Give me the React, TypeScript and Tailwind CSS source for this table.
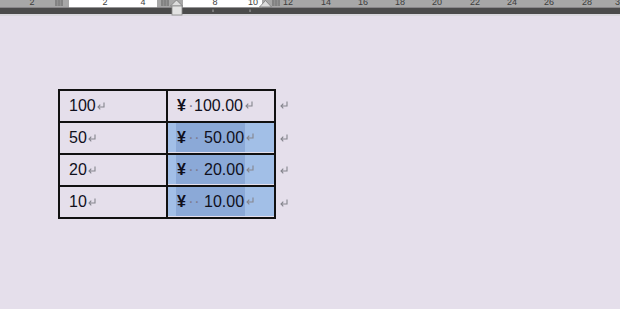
import React from "react";

const rows = [
  { qty: "100", spaces: 1, amount: "100.00", selected: false },
  { qty: "50", spaces: 2, amount: "50.00", selected: true },
  { qty: "20", spaces: 2, amount: "20.00", selected: true },
  { qty: "10", spaces: 2, amount: "10.00", selected: true },
];

const rulerLabels: [number, string][] = [
  [32, "2"],
  [105, "2"],
  [143, "4"],
  [215, "8"],
  [253, "10"],
  [288, "12"],
  [326, "14"],
  [363, "16"],
  [400, "18"],
  [437, "20"],
  [475, "22"],
  [512, "24"],
  [549, "26"],
  [587, "28"],
  [620, "30"],
];

const ReturnMark = () => (
  <svg width="10" height="9" viewBox="0 0 10 9" className="shrink-0">
    <path
      d="M8 0.5 V5 H2 M4.3 2.7 L2 5 L4.3 7.3"
      fill="none"
      stroke="#85858d"
      strokeWidth="1.1"
    />
  </svg>
);

const GridIcon = ({ x }: { x: number }) => (
  <g stroke="#6e6e6e" strokeWidth="0.8">
    <path d={`M${x} 1 H${x + 8} M${x} 3 H${x + 8} M${x} 5 H${x + 8}`} />
    <path d={`M${x + 1} 0 V6 M${x + 4} 0 V6 M${x + 7} 0 V6`} />
  </g>
);

const Ruler = () => (
  <svg width="620" height="16" viewBox="0 0 620 16" className="block">
    <rect x="0" y="0" width="620" height="7.5" fill="#a7a7a7" />
    <rect x="69" y="0" width="88" height="7.5" fill="#ffffff" />
    <rect x="183" y="0" width="79" height="7.5" fill="#ffffff" />
    <rect x="0" y="7.5" width="620" height="6.5" fill="#4b4b4b" />
    <rect x="0" y="14" width="620" height="2" fill="#d8d6dc" />
    {rulerLabels.map(([x, t], i) => (
      <text
        key={i}
        x={x}
        y="5"
        fontSize="9"
        textAnchor="middle"
        fill="#3c3c3c"
        fontFamily="'Liberation Sans', Arial, sans-serif"
      >
        {t}
      </text>
    ))}
    <GridIcon x={55} />
    <GridIcon x={161} />
    <GridIcon x={272} />
    <path d="M213 9.5 V12 M250 9.5 V12" stroke="#a9a9a9" strokeWidth="1" />
    <path d="M170.5 6 L176.5 0 L182.5 6 Z" fill="#dcdcdc" stroke="#7a7a7a" strokeWidth="0.8" />
    <rect x="172" y="6" width="10" height="9" fill="#e2e2e2" stroke="#8a8a8a" strokeWidth="0.8" />
    <path d="M259.5 7 L265.5 0.5 L271.5 7 Z" fill="#dcdcdc" stroke="#7a7a7a" strokeWidth="0.8" />
  </svg>
);

const Dots = ({ count }: { count: number }) => (
  <>
    {Array.from({ length: count }).map((_, i) => (
      <span key={i} className="w-[6px] text-center text-[#7d7d92]">
        ·
      </span>
    ))}
  </>
);

export default function App() {
  return (
    <div
      className="w-[620px] h-[309px] overflow-hidden bg-[#e5dfeb] text-[#10101c]"
      style={{ fontFamily: "'Liberation Sans', Arial, sans-serif" }}
    >
      <Ruler />
      <div className="flex items-start pl-[58px] pt-[73px]">
        <table className="border-collapse text-[16px] leading-none">
          <tbody>
            {rows.map((r) => (
              <tr key={r.qty}>
                <td className="border-2 border-[#111] w-[108px] h-[32px] p-0 align-top">
                  <div className="flex items-center h-[29px] pl-[9px] pt-[1px]">
                    <span>{r.qty}</span>
                    <ReturnMark />
                  </div>
                </td>
                <td className="border-2 border-[#111] w-[108px] h-[32px] p-0 align-top">
                  <div
                    className={
                      r.selected
                        ? "flex items-center h-[29px] pl-[8px] bg-[#a2bfe7]"
                        : "flex items-center h-[29px] pl-[8px]"
                    }
                  >
                    <span
                      className={
                        r.selected
                          ? "flex items-center h-full pl-[1px] pr-[1px] bg-[#8ba9d7]"
                          : "flex items-center h-full pl-[1px] pr-[1px]"
                      }
                    >
                      <span className="w-[11px] font-bold">¥</span>
                      <Dots count={r.spaces} />
                      {r.spaces === 2 && <span className="w-[4px]" />}
                      <span>{r.amount}</span>
                    </span>
                    <ReturnMark />
                  </div>
                </td>
              </tr>
            ))}
          </tbody>
        </table>
        <div className="flex flex-col pl-[3px]">
          {rows.map((r) => (
            <div key={r.qty} className="h-[32.5px] flex items-center pt-[1px]">
              <ReturnMark />
            </div>
          ))}
        </div>
      </div>
    </div>
  );
}
